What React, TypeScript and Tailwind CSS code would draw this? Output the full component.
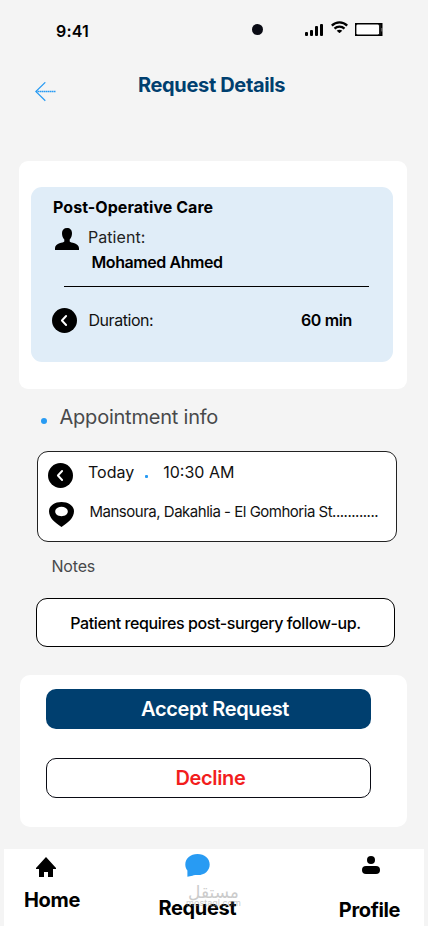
import type { ReactNode } from "react";

function StatusBar() {
  return (
    <header className="flex h-[62px] items-start pl-14 pr-[45px]">
      <span className="mt-[21px] text-base font-semibold leading-5 tracking-[0.2px]">
        9:41
      </span>
      <div className="ml-auto mr-[42px] mt-6 h-[11px] w-[11px] rounded-full bg-[#0a0b14]" />
      <div className="mt-6 flex h-3 items-end gap-0.5">
        <div className="h-1 w-[3px] rounded-[1px] bg-black" />
        <div className="h-1.5 w-[3px] rounded-[1px] bg-black" />
        <div className="h-2.5 w-[3px] rounded-[1px] bg-black" />
        <div className="h-3 w-[3px] rounded-[1px] bg-black" />
      </div>
      <svg
        className="ml-2 mt-[20.5px] h-3 w-[17px]"
        viewBox="0 0 17 12"
        fill="none"
        stroke="black"
        strokeWidth="2.3"
        aria-hidden="true"
      >
        <path d="M0.8 4.6C5.1 0.3 11.9 0.3 16.2 4.6" />
        <path d="M3.5 7.6C6.3 4.9 10.7 4.9 13.5 7.6" />
        <path d="M8.5 12.2L5.7 9.8C7.3 8.3 9.7 8.3 11.3 9.8Z" fill="black" stroke="none" />
      </svg>
      <svg
        className="ml-[7px] mt-[23px] h-[13px] w-7"
        viewBox="0 0 28 13"
        aria-hidden="true"
      >
        <path d="M0 0H27.5V13H0Z" fill="black" />
        <rect x="1.4" y="1.4" width="22.6" height="10.2" rx="1.4" fill="white" />
        <path d="M24.9 1.5V11.5" stroke="#777" strokeWidth="0.5" />
        <path d="M27 5V8.5" stroke="#999" strokeWidth="1" />
      </svg>
    </header>
  );
}

function BackCircle() {
  return (
    <svg className="h-[25px] w-[25px] shrink-0" viewBox="0 0 25 25" fill="none" aria-hidden="true">
      <circle cx="12.5" cy="12.5" r="12.5" fill="black" />
      <path
        d="M14.1 8L9.9 12.5L14.1 17"
        stroke="white"
        strokeWidth="1.9"
        strokeLinecap="round"
        strokeLinejoin="round"
      />
    </svg>
  );
}

function NavItem({
  label,
  className,
  children,
}: {
  label: string;
  className: string;
  children: ReactNode;
}) {
  return (
    <button className={`flex flex-col items-center ${className}`}>
      {children}
      <span className="text-xl font-bold leading-6 tracking-[-0.35px]">{label}</span>
    </button>
  );
}

export default function App() {
  return (
    <div className="flex h-[926px] w-[428px] flex-col overflow-hidden bg-[#f4f4f4] font-['Inter',sans-serif] text-black">
      <StatusBar />

      <div className="flex h-[99px] items-start pl-[35px]">
        <button aria-label="Back" className="mt-5">
          <svg className="h-5 w-[21px]" viewBox="0 0 21 20" fill="none" stroke="#289bf3" aria-hidden="true">
            <path d="M10.3 0.3L0.8 9.5L10.3 18.8" strokeWidth="1.2" />
            <path d="M1 9.5H20.5" strokeWidth="1.4" strokeDasharray="1.6 0.4" />
          </svg>
        </button>
        <h1 className="ml-[82px] mt-[11px] text-xl font-bold leading-6 tracking-[-0.35px] text-[#003f6f]">
          Request Details
        </h1>
      </div>

      <section className="ml-[19px] h-[228px] w-[388px] rounded-[9px] bg-white px-3 pt-[26px]">
        <div className="flex h-[175px] w-[362px] flex-col rounded-[11px] bg-[#e0edf8]">
          <h2 className="ml-[22px] mt-2.5 text-base font-bold leading-5 tracking-[0.05px]">
            Post-Operative Care
          </h2>
          <div className="ml-6 mt-2.5 flex">
            <svg className="mt-px h-[22px] w-6" viewBox="0 0 24 22" aria-hidden="true">
              <path d="M12 0C8.9 0 7 2 7 5.1C7 8 7.8 10.3 9.3 11.6V13.6C8.5 15 0.4 15 0 20V22H24V20C23.6 15 15.5 15 14.7 13.6V11.6C16.2 10.3 17 8 17 5.1C17 2 15.1 0 12 0Z" />
            </svg>
            <div className="ml-[9px]">
              <p className="text-base leading-5 tracking-[0.05px] text-[#222]">Patient:</p>
              <p className="ml-[3.5px] mt-[5px] text-base font-semibold leading-5 tracking-[-0.43px]">
                Mohamed Ahmed
              </p>
            </div>
          </div>
          <hr className="ml-[33px] mt-3.5 w-[305px] border-black" />
          <div className="ml-[20.5px] mt-[21px] flex items-center">
            <BackCircle />
            <span className="-mt-px ml-3 text-base leading-5 tracking-[-0.45px] text-[#111]">
              Duration:
            </span>
            <span className="-mt-px ml-auto mr-[41px] text-base font-semibold leading-5 tracking-[-0.35px]">
              60 min
            </span>
          </div>
        </div>
      </section>

      <div className="ml-[41px] mt-4 flex items-center">
        <div className="mt-2 h-1.5 w-1.5 rounded-full bg-[#289bf3]" />
        <h2 className="ml-[12.5px] text-xl leading-6 tracking-[-0.22px] text-[#48494b]">Appointment info</h2>
      </div>

      <section className="ml-[37px] mt-[22px] h-[91px] w-[360px] rounded-[11px] border border-[#222] bg-white px-2.5 pt-[11px]">
        <div className="flex">
          <BackCircle />
          <span className="-mt-px ml-[15px] text-base leading-5 text-[#111]">Today</span>
          <span className="ml-[11px] mt-3 h-[3px] w-[3px] rounded-[1px] bg-[#289bf3]" />
          <span className="-mt-px ml-[15px] text-base leading-5 text-[#111]">10:30 AM</span>
        </div>
        <div className="mt-3.5 flex">
          <svg className="ml-px h-[25px] w-[25px] shrink-0" viewBox="0 0 25 25" aria-hidden="true">
            <path
              fillRule="evenodd"
              d="M12.5 0C5.4 0 0 3.9 0 9.3C0 15.8 5.8 20.7 12.5 25C19.2 20.7 25 15.8 25 9.3C25 3.9 19.6 0 12.5 0ZM12.5 4.8C16.2 4.8 18.8 6.8 18.8 9.5C18.8 12.2 16.2 14.2 12.5 14.2C8.8 14.2 6.2 12.2 6.2 9.5C6.2 6.8 8.8 4.8 12.5 4.8Z"
            />
          </svg>
          <span className="ml-[15.5px] whitespace-nowrap text-[15px] leading-5 tracking-[-0.49px] text-[#111]">
            Mansoura, Dakahlia - El Gomhoria St............
          </span>
        </div>
      </section>

      <h3 className="ml-[51.5px] mt-3.5 text-base leading-5 tracking-[-0.2px] text-[#48494b]">Notes</h3>
      <p className="ml-9 mt-[22px] flex h-[49px] w-[359px] items-center justify-center rounded-[11px] border border-black bg-white text-base font-medium tracking-[-0.4px]">
        Patient requires post-surgery follow-up.
      </p>

      <section className="ml-5 mt-7 flex h-[152px] w-[387px] flex-col gap-[29px] rounded-[10px] bg-white pl-[26px] pt-3.5">
        <button className="h-10 w-[325px] rounded-[10px] bg-[#003f6f] pl-[13px] text-xl font-semibold tracking-[-0.37px] text-white">
          Accept Request
        </button>
        <button className="h-10 w-[325px] rounded-[10px] border border-[#0a0b14] pl-1 text-xl font-semibold tracking-[-0.35px] text-[#f21d1d]">
          Decline
        </button>
      </section>

      <nav className="relative mx-1 mt-[22px] flex h-[77px] items-start bg-white">
        <NavItem label="Home" className="ml-5 mt-2">
          <svg className="mb-[11px] mr-3 h-5 w-5" viewBox="0 0 20 20" aria-hidden="true">
            <path d="M10 0L20 11V12H17V20H12V15H8V20H3V12H0V11Z" />
          </svg>
        </NavItem>
        <NavItem label="Request" className="ml-[78.5px] mt-[5px]">
          <svg className="mb-[19px] h-[23px] w-[25px]" viewBox="0 0 25 23" fill="#289bf3" aria-hidden="true">
            <path d="M12.5 0C19.5 0 24.7 4.4 24.7 10.4C24.7 16.7 19.5 21 13 21C11 21 9.2 21 7.4 21.7L2.4 22.8V16.4C1 14.7 0.3 12.8 0.3 10.4C0.3 4.4 5.5 0 12.5 0Z" />
          </svg>
        </NavItem>
        <NavItem label="Profile" className="ml-[102.5px] mt-[7px]">
          <svg className="mb-6 ml-0.5 h-[18px] w-[18px]" viewBox="0 0 18 18" aria-hidden="true">
            <circle cx="9" cy="4" r="4" />
            <rect y="10" width="18" height="8" rx="4" />
          </svg>
        </NavItem>
        <div className="pointer-events-none absolute left-[183px] top-[32px] flex w-[53px] flex-col items-center text-[#999] opacity-50">
          <span lang="ar" dir="rtl" className="font-['DejaVu_Sans',sans-serif] text-[17px] leading-[22px]">
            مستقل
          </span>
          <span className="-mt-1.5 text-[9px] leading-3">mostaql.com</span>
        </div>
      </nav>
    </div>
  );
}
